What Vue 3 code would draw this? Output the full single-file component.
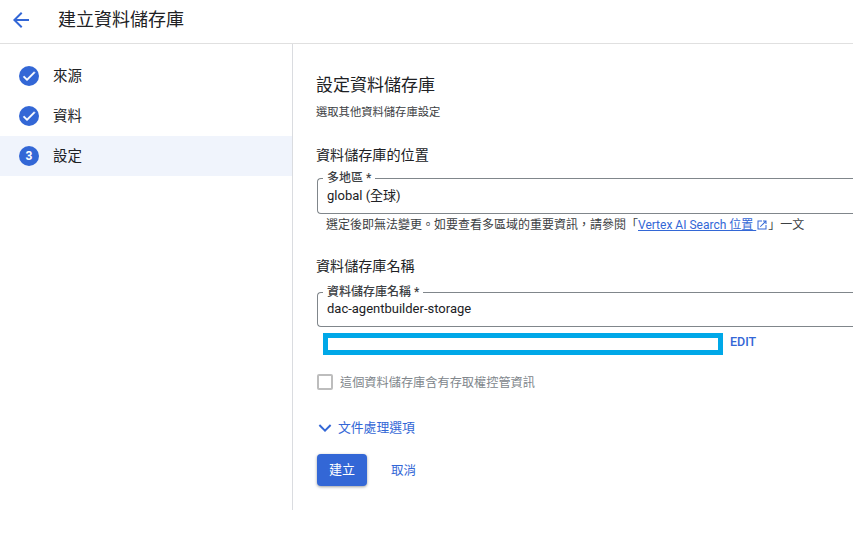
<script setup>
const steps = [
  { label: '來源', done: true },
  { label: '資料', done: true },
  { label: '設定', done: false, num: 3 },
]
</script>

<template>
  <div class="page">
    <header class="top">
      <svg class="back" width="24" height="24" viewBox="0 0 24 24"><path d="M20 11H7.83l5.59-5.59L12 4l-8 8 8 8 1.41-1.41L7.83 13H20z" fill="#3367d6"/></svg>
      <h1 class="top-title">建立資料儲存庫</h1>
    </header>
    <div class="body">
      <aside class="side">
        <div v-for="s in steps" :key="s.label" class="step" :class="{ active: !s.done }">
          <span class="dot">
            <svg v-if="s.done" width="16" height="16" viewBox="0 0 24 24"><path d="M9 16.2 4.8 12l-1.4 1.4L9 19 21 7l-1.4-1.4z" fill="#fff" stroke="#fff" stroke-width="1"/></svg>
            <template v-else>{{ s.num }}</template>
          </span>
          <span class="step-label">{{ s.label }}</span>
        </div>
      </aside>
      <main class="main">
        <h2 class="title">設定資料儲存庫</h2>
        <p class="sub">選取其他資料儲存庫設定</p>

        <h3 class="section first">資料儲存庫的位置</h3>
        <div class="field">
          <span class="float">多地區 *</span>
          <span class="value">global (全球)</span>
        </div>
        <p class="hint">選定後即無法變更。如要查看多區域的重要資訊，請參閱「<a class="link">Vertex AI Search 位置 <svg width="12" height="12" viewBox="0 0 24 24"><path d="M19 19H5V5h7V3H3v18h18v-9h-2zM14 3v2h3.59l-9.83 9.83 1.41 1.41L19 6.41V10h2V3z" fill="#3367d6"/></svg></a>」一文</p>

        <h3 class="section second">資料儲存庫名稱</h3>
        <div class="field tight">
          <span class="float">資料儲存庫名稱 *</span>
          <span class="value">dac-agentbuilder-storage</span>
        </div>
        <div class="id-row">
          <div class="redact"></div>
          <span class="edit">EDIT</span>
        </div>

        <label class="check">
          <span class="box"></span>
          <span class="check-text">這個資料儲存庫含有存取權控管資訊</span>
        </label>

        <div class="expand">
          <svg width="18" height="18" viewBox="0 0 24 24"><path d="M4.5 8 12 15.5 19.5 8" fill="none" stroke="#3367d6" stroke-width="2.6"/></svg>
          <span>文件處理選項</span>
        </div>

        <div class="actions">
          <button class="primary">建立</button>
          <button class="ghost">取消</button>
        </div>
      </main>
    </div>
  </div>
</template>

<style>
html, body { margin: 0; background: #fff; overflow: hidden; }
</style>

<style scoped>
.page {
  width: 853px;
  height: 537px;
  overflow: hidden;
  font-family: Roboto, "Noto Sans CJK TC", sans-serif;
  color: #202124;
  background: #fff;
}
.top {
  height: 39px;
  padding: 0 0 4px 9px;
  border-bottom: 1px solid #e0e0e0;
  display: flex;
  align-items: center;
}
.back { flex: none; }
.top-title { margin: 0 0 0 25px; font-size: 18px; font-weight: 400; line-height: 24px; }
.body { display: flex; height: 466px; }
.side {
  width: 292px;
  flex: none;
  border-right: 1px solid #dadce0;
  padding-top: 12px;
}
.step { height: 40px; display: flex; align-items: center; padding-left: 19px; }
.step.active { background: #f0f4fc; }
.dot {
  width: 20px;
  height: 20px;
  border-radius: 50%;
  background: #3367d6;
  color: #fff;
  font-size: 12px;
  font-weight: 700;
  display: flex;
  align-items: center;
  justify-content: center;
}
.step-label { margin: 0 0 3px 14px; font-size: 14.5px; }
.main { flex: 1; min-width: 0; padding: 29px 0 0 23px; }
.title { margin: 0; font-size: 17px; font-weight: 400; line-height: 24px; }
.sub { margin: 8px 0 0; font-size: 11.3px; line-height: 16px; color: #3c4043; }
.section { margin: 0; font-size: 14.1px; font-weight: 400; line-height: 20px; }
.section.first { margin-top: 24px; }
.section.second { margin-top: 23px; }
.field {
  position: relative;
  box-sizing: border-box;
  margin: 13px -8px 0 1px;
  height: 36px;
  border: 1px solid #80868b;
  border-right: none;
  border-radius: 4px 0 0 4px;
  display: flex;
  align-items: center;
  padding: 0 0 3px 9px;
}
.field.tight { margin-top: 16px; height: 35px; padding-bottom: 2px; }
.float {
  position: absolute;
  left: 5px;
  top: -8px;
  padding: 0 4px;
  background: #fff;
  font-size: 12px;
  font-weight: 500;
  line-height: 14px;
  color: #3c4043;
}
.value { font-size: 13px; }
.hint { margin: 3px 0 0 10px; font-size: 12px; line-height: 16px; color: #3c4043; white-space: nowrap; }
.link { color: #3367d6; text-decoration: underline; }
.link svg { vertical-align: -2px; }
.id-row { display: flex; align-items: center; margin-top: 6px; padding-left: 7px; }
.redact { box-sizing: border-box; width: 400px; height: 22px; border: 5px solid #00a8e8; background: #fff; }
.edit { margin: 0 0 5px 7px; font-size: 12.5px; line-height: 16px; font-weight: 500; color: #3367d6; }
.check { display: flex; align-items: center; margin-top: 18px; font-size: 12.2px; line-height: 16px; color: #80868b; }
.check-text { padding-top: 2px; }
.box { flex: none; width: 12px; height: 12px; margin: 0 7px 0 1px; border: 2px solid #bdbdbd; border-radius: 2px; }
.expand { display: flex; align-items: center; gap: 4px; margin-top: 28px; font-size: 12.8px; line-height: 18px; color: #3367d6; }
.actions { display: flex; align-items: center; margin-top: 17px; padding-left: 1px; }
.primary {
  width: 50px;
  height: 32px;
  padding: 0 0 3px;
  border: 0;
  border-radius: 4px;
  background: #3367d6;
  color: #fff;
  font: inherit;
  font-size: 13px;
  box-shadow: 0 1px 3px rgba(60, 64, 67, .5);
}
.ghost { margin: 0 0 2px 24px; padding: 0; border: 0; background: none; font: inherit; font-size: 12.5px; color: #3367d6; }
</style>
